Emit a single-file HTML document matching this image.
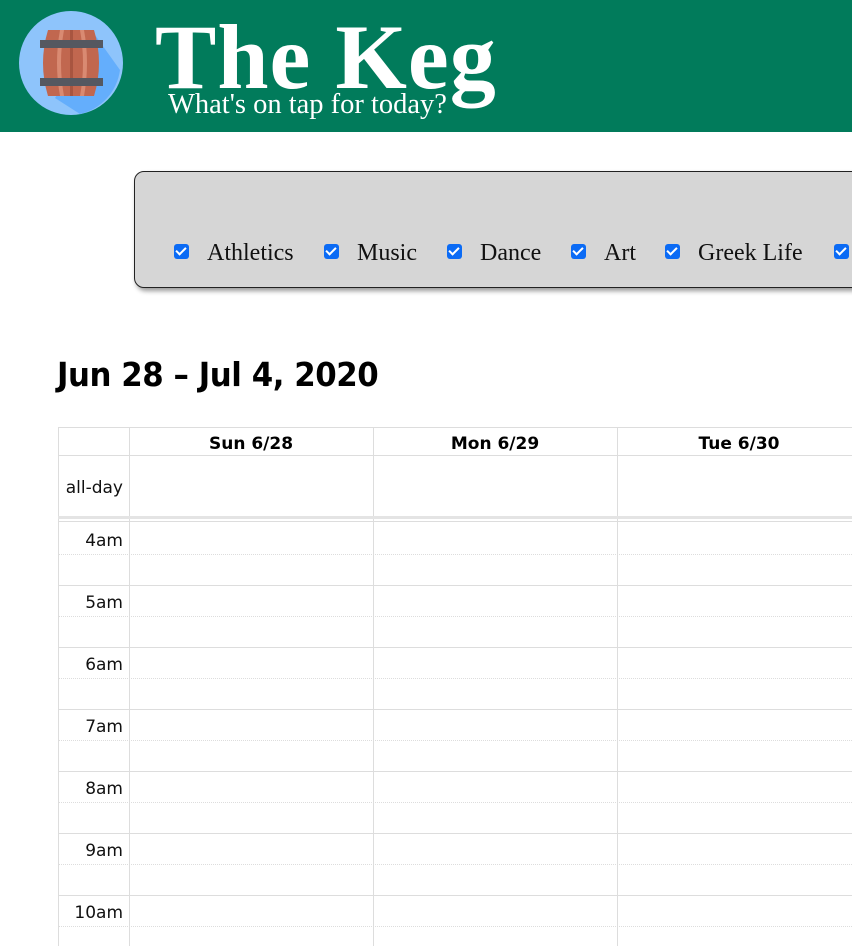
<!DOCTYPE html>
<html><head><style>
body{margin:0;width:852px;height:946px;overflow:hidden;background:#fff;font-family:"DejaVu Sans","Liberation Sans",sans-serif;position:relative}
.hdr{position:absolute;left:0;top:0;width:852px;height:132px;background:#017b5b}
.t1{position:absolute;left:155px;top:2px;font:bold 92px "Liberation Serif",serif;color:#fff;line-height:110px;letter-spacing:1px}
.t2{position:absolute;left:168px;top:89px;font:28.5px "Liberation Serif",serif;color:#fff}
.box{position:absolute;left:134px;top:171px;width:740px;height:115px;background:#d6d6d6;border:1px solid #222;border-radius:10px;box-shadow:2px 3px 5px rgba(0,0,0,.4)}
.cb{position:absolute;top:244px;width:15px;height:15px;background:#0b6bf5;border-radius:3px}
.cb:after{content:"";position:absolute;left:4px;top:1px;width:4px;height:8px;border:solid #fff;border-width:0 2px 2px 0;transform:rotate(45deg)}
.lb{position:absolute;top:240px;font:24px "Liberation Serif",serif;color:#111}
h1{position:absolute;left:57px;top:355px;margin:0;font:bold 33px "DejaVu Sans",sans-serif;letter-spacing:-0.5px;transform:scaleX(0.935);transform-origin:left}
.v{position:absolute;top:427px;bottom:0;width:1px;background:#ddd}
.h{position:absolute;left:58px;right:0;height:1px;background:#ddd}
.d{position:absolute;left:58px;right:0;border-top:1px dotted #ddd}
.c{position:absolute;font:bold 17px "DejaVu Sans",sans-serif;top:434px;text-align:center;width:244px}
.tm{position:absolute;left:58px;width:65px;text-align:right;font:17px "DejaVu Sans",sans-serif;color:#111}
</style></head><body>
<div class="hdr">
<svg width="132" height="132" style="position:absolute;left:0;top:0">
<circle cx="71" cy="63" r="52" fill="#8ec4fb"/>
<path d="M95 35 L120 70 A52 52 0 0 1 80 114 L55 98 Z" fill="#64aefc"/>
<path d="M48 30 Q38 63 48 96 L94 96 Q104 63 94 30 Z" fill="#c1674f"/>
<path d="M60 30 Q54 63 60 96 L64 96 Q58 63 64 30Z M80 30 Q86 63 80 96 L84 96 Q90 63 84 30Z" fill="#d98a72"/>
<path d="M70 30 L70 96 L73 96 L73 30Z" fill="#a85540"/>
<rect x="40" y="40" width="63" height="8" fill="#555860"/>
<rect x="40" y="78" width="63" height="8" fill="#555860"/>
</svg>
<div class="t1">The Keg</div>
<div class="t2">What's on tap for today?</div>
</div>
<div class="box"></div>
<div class="cb" style="left:174px"></div><div class="lb" style="left:207px">Athletics</div>
<div class="cb" style="left:324px"></div><div class="lb" style="left:357px">Music</div>
<div class="cb" style="left:447px"></div><div class="lb" style="left:480px">Dance</div>
<div class="cb" style="left:571px"></div><div class="lb" style="left:604px">Art</div>
<div class="cb" style="left:665px"></div><div class="lb" style="left:698px">Greek Life</div>
<div class="cb" style="left:834px"></div>
<h1>Jun 28 – Jul 4, 2020</h1>
<div class="v" style="left:58px"></div><div class="v" style="left:129px"></div><div class="v" style="left:373px"></div><div class="v" style="left:617px"></div>
<div class="h" style="top:427px"></div><div class="h" style="top:455px"></div>
<div class="h" style="top:516px;height:3px;background:#e4e4e4"></div><div class="h" style="top:521px"></div>
<div class="c" style="left:129px">Sun 6/28</div><div class="c" style="left:373px">Mon 6/29</div><div class="c" style="left:617px">Tue 6/30</div>
<div class="tm" style="top:478px">all-day</div>
<div class="d" style="top:554px"></div><div class="h" style="top:585px"></div>
<div class="d" style="top:616px"></div><div class="h" style="top:647px"></div>
<div class="d" style="top:678px"></div><div class="h" style="top:709px"></div>
<div class="d" style="top:740px"></div><div class="h" style="top:771px"></div>
<div class="d" style="top:802px"></div><div class="h" style="top:833px"></div>
<div class="d" style="top:864px"></div><div class="h" style="top:895px"></div>
<div class="d" style="top:926px"></div>
<div class="tm" style="top:531px">4am</div>
<div class="tm" style="top:593px">5am</div>
<div class="tm" style="top:655px">6am</div>
<div class="tm" style="top:717px">7am</div>
<div class="tm" style="top:779px">8am</div>
<div class="tm" style="top:841px">9am</div>
<div class="tm" style="top:903px">10am</div>
</body></html>
